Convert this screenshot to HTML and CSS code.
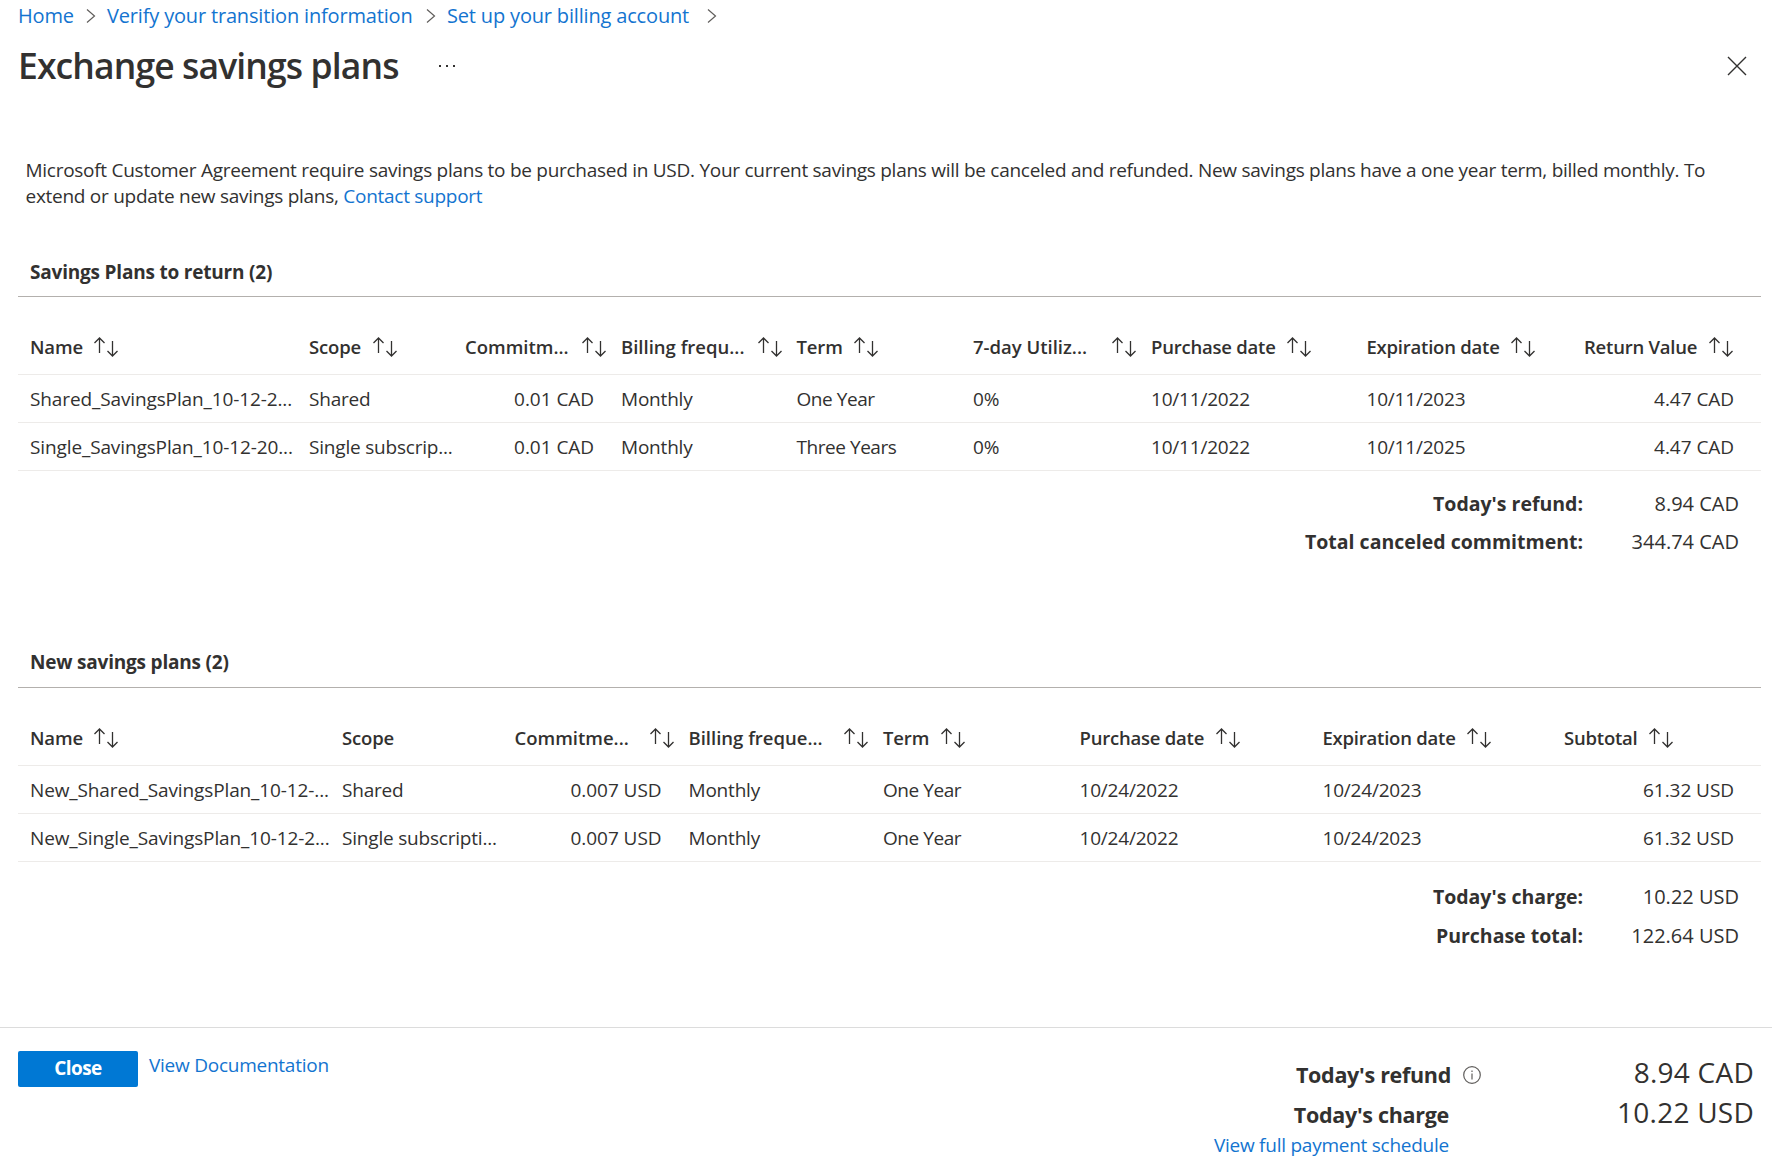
FILE: index.html
```html
<!DOCTYPE html>
<html lang="en">
<head>
<meta charset="utf-8">
<title>Exchange savings plans</title>
<link rel="stylesheet" href="styles.css">
</head>
<body>
<svg class="defs" aria-hidden="true">
  <symbol id="sort" viewBox="0 0 24 20"><path d="M5.5 16V1.3M.5 6l5-5 5 5M18.500 4v14.700M13.500 14l5 5 5-5"/></symbol>
  <symbol id="chevron" viewBox="0 0 10 14"><path d="M1 .5 8.500 7 1 13.500"/></symbol>
</svg>
<nav class="breadcrumb">
  <a class="crumb-home">Home</a><svg class="chevron"><use href="#chevron"/></svg>
  <a class="crumb-verify">Verify your transition information</a><svg class="chevron"><use href="#chevron"/></svg>
  <a class="crumb-setup">Set up your billing account</a><svg class="chevron"><use href="#chevron"/></svg>
</nav>
<header class="title-bar">
  <h1>Exchange savings plans</h1>
  <svg class="more" viewBox="0 0 18 4"><path d="M1 1h2v2H1zM8 1h2v2H8zM15 1h2v2h-2z"/></svg>
  <svg class="dismiss" viewBox="0 0 20 20"><path d="M1 1l18 18M19 1 1 19"/></svg>
</header>
<main>
  <p class="notice">Microsoft Customer Agreement require savings plans to be purchased in USD. Your current savings plans will be canceled and refunded. New savings plans have a one year term, billed monthly. To<br>extend or update new savings plans, <a>Contact support</a></p>

  <section class="plans returned">
    <h2>Savings Plans to return (2)</h2>
    <div class="row head">
      <div>Name<svg class="sort"><use href="#sort"/></svg></div>
      <div>Scope<svg class="sort"><use href="#sort"/></svg></div>
      <div class="cut">Commitm...<svg class="sort"><use href="#sort"/></svg></div>
      <div class="cut">Billing frequ...<svg class="sort"><use href="#sort"/></svg></div>
      <div>Term<svg class="sort"><use href="#sort"/></svg></div>
      <div class="cut">7-day Utiliz...<svg class="sort"><use href="#sort"/></svg></div>
      <div>Purchase date<svg class="sort"><use href="#sort"/></svg></div>
      <div>Expiration date<svg class="sort"><use href="#sort"/></svg></div>
      <div>Return Value<svg class="sort"><use href="#sort"/></svg></div>
    </div>
    <div class="row">
      <div class="name">Shared_SavingsPlan_10-12-2...</div><div>Shared</div><div class="num">0.01 CAD</div><div>Monthly</div><div class="term">One Year</div><div>0%</div><div>10/11/2022</div><div>10/11/2023</div><div class="num">4.47 CAD</div>
    </div>
    <div class="row">
      <div class="name">Single_SavingsPlan_10-12-20...</div><div>Single subscrip...</div><div class="num">0.01 CAD</div><div>Monthly</div><div class="term">Three Years</div><div>0%</div><div>10/11/2022</div><div>10/11/2025</div><div class="num">4.47 CAD</div>
    </div>
    <dl class="totals">
      <dt>Today's refund:</dt><dd>8.94 CAD</dd>
      <dt>Total canceled commitment:</dt><dd>344.74 CAD</dd>
    </dl>
  </section>

  <section class="plans purchased">
    <h2>New savings plans (2)</h2>
    <div class="row head">
      <div>Name<svg class="sort"><use href="#sort"/></svg></div>
      <div>Scope</div>
      <div class="cut">Commitme...<svg class="sort"><use href="#sort"/></svg></div>
      <div class="cut">Billing freque...<svg class="sort"><use href="#sort"/></svg></div>
      <div>Term<svg class="sort"><use href="#sort"/></svg></div>
      <div>Purchase date<svg class="sort"><use href="#sort"/></svg></div>
      <div>Expiration date<svg class="sort"><use href="#sort"/></svg></div>
      <div>Subtotal<svg class="sort"><use href="#sort"/></svg></div>
    </div>
    <div class="row">
      <div class="name">New_Shared_SavingsPlan_10-12-...</div><div>Shared</div><div class="num">0.007 USD</div><div>Monthly</div><div class="term">One Year</div><div>10/24/2022</div><div>10/24/2023</div><div class="num">61.32 USD</div>
    </div>
    <div class="row">
      <div class="name">New_Single_SavingsPlan_10-12-2...</div><div>Single subscripti...</div><div class="num">0.007 USD</div><div>Monthly</div><div class="term">One Year</div><div>10/24/2022</div><div>10/24/2023</div><div class="num">61.32 USD</div>
    </div>
    <dl class="totals">
      <dt>Today's charge:</dt><dd>10.22 USD</dd>
      <dt>Purchase total:</dt><dd>122.64 USD</dd>
    </dl>
  </section>
</main>
<footer class="footer">
  <button class="close">Close</button>
  <a class="docs">View Documentation</a>
  <div class="summary">
    <div class="labels">
      <div class="label">Today's refund</div>
      <div class="label charge">Today's charge</div>
      <a class="schedule">View full payment schedule</a>
    </div>
    <svg class="info" viewBox="0 0 18 18"><circle cx="9" cy="9" r="8.300"/><path d="M9 7.500v6M9 4.500v1.500"/></svg>
    <div class="amounts"><div>8.94 CAD</div><div>10.22 USD</div></div>
  </div>
</footer>
</body>
</html>
```
FILE: styles.css
```css
* { box-sizing: border-box; }
body {
  margin: 0;
  height: 1162px;
  display: flex;
  flex-direction: column;
  overflow: hidden;
  background: #fff;
  color: #323130;
  font: 19px/26px "Open Sans", "Noto Sans", sans-serif;
  letter-spacing: -0.2px;
}
a { color: #1374d0; }
h1, h2, p, dl, dd { margin: 0; }
svg { flex: none; fill: none; stroke: #323130; }
.defs { width: 0; height: 0; position: absolute; }

.breadcrumb {
  height: 30px;
  display: flex;
  align-items: center;
  padding-left: 18px;
  font-size: 20px;
  line-height: 30px;
  white-space: nowrap;
}
.breadcrumb a { padding-top: 2px; letter-spacing: -0.17px; }
.crumb-home { width: 68px; }
.crumb-verify { width: 306px; margin-left: 11px; }
.crumb-setup { width: 249px; margin-left: 11px; }
.chevron { width: 10px; height: 14px; margin-top: 2px; stroke: #605e5c; stroke-width: 1.2; }
.crumb-verify + .chevron { margin-left: 13px; }
.crumb-setup + .chevron { margin-left: 11px; }

.title-bar {
  height: 68px;
  display: flex;
  align-items: center;
  padding: 0 25px 0 18px;
}
.title-bar h1 {
  width: 420px;
  padding-top: 1px;
  font-size: 35.5px;
  line-height: 68px;
  font-weight: 600;
  letter-spacing: -0.88px;
  white-space: nowrap;
}
.more { width: 18px; height: 4px; margin-top: 4px; fill: #323130; stroke: none; }
.dismiss { width: 20px; height: 20px; margin: 4px 0 0 auto; stroke-width: 1.4; }

.notice {
  margin: 59px 0 39px 25.5px;
  letter-spacing: -0.273px;
  white-space: nowrap;
}

.plans { margin: 0 11px 0 18px; }
.plans h2 {
  height: 49px;
  padding-left: 12px;
  border-bottom: 1px solid #b3b0ad;
  font-size: 19px;
  line-height: 48px;
  font-weight: 700;
}
.row {
  display: grid;
  height: 48px;
  padding-left: 12px;
  border-bottom: 1px solid #edebe9;
  line-height: 48px;
  white-space: nowrap;
}
.returned .row { grid-template-columns: 279px 156px 156px 175.500px 176.500px 178px 215.500px 217.500px 1fr; }
.purchased .row { grid-template-columns: 312px 172.500px 174px 194.500px 196.500px 243px 241.500px 1fr; }
.row.head {
  height: 78px;
  padding-top: 23px;
  line-height: 54px;
  font-size: 18.5px;
  font-weight: 600;
  letter-spacing: -0.15px;
}
.head > div { display: flex; align-items: center; gap: 11.5px; }
.head > .cut { justify-content: space-between; padding-right: 15px; letter-spacing: 0; }
.head > div:nth-last-child(-n+3) { letter-spacing: -0.22px; }
.name { letter-spacing: -0.12px; }
.term { letter-spacing: -0.45px; }
.sort { width: 24px; height: 20px; stroke-width: 1.3; }
.num { text-align: right; padding-right: 27px; letter-spacing: -0.05px; }
.totals {
  display: grid;
  grid-template-columns: 1fr 156px;
  margin-top: 14px;
  padding-right: 22px;
  text-align: right;
  font-size: 20px;
  line-height: 38px;
  letter-spacing: 0;
}
.totals dt { font-weight: 700; font-size: 19.5px; }
.purchased { margin-top: 77px; }
.purchased h2 { height: 50px; }
.purchased .totals { margin-top: 15px; line-height: 39px; }

.footer {
  display: flex;
  align-items: flex-start;
  height: 135px;
  margin-top: auto;
  padding-left: 18px;
  border-top: 1px solid #dcdcdc;
}
.close {
  width: 120px;
  height: 36px;
  margin-top: 23px;
  padding: 0 0 2px;
  border: 0;
  border-radius: 2px;
  background: #0078d4;
  color: #fff;
  font: 700 19px/34px "Open Sans", "Noto Sans", sans-serif;
  letter-spacing: -0.6px;
}
.docs { margin: 24px 0 0 11px; letter-spacing: -0.25px; }
.summary { display: flex; margin: 24px 18px 0 auto; }
.labels {
  display: flex;
  flex-direction: column;
  align-items: flex-end;
  margin-top: 3px;
}
.label {
  font-size: 21.5px;
  line-height: 40px;
  font-weight: 700;
  letter-spacing: -0.3px;
}
.labels { margin-right: 1px; }
.charge, .schedule { margin-right: 2px; }
.schedule { line-height: 20px; letter-spacing: -0.25px; }
.info { width: 18px; height: 18px; margin: 14px 0 0 11px; stroke: #605e5c; stroke-width: 1.2; }
.amounts {
  width: 273px;
  text-align: right;
  font-size: 28px;
  line-height: 40px;
  letter-spacing: 0.25px;
}
```
